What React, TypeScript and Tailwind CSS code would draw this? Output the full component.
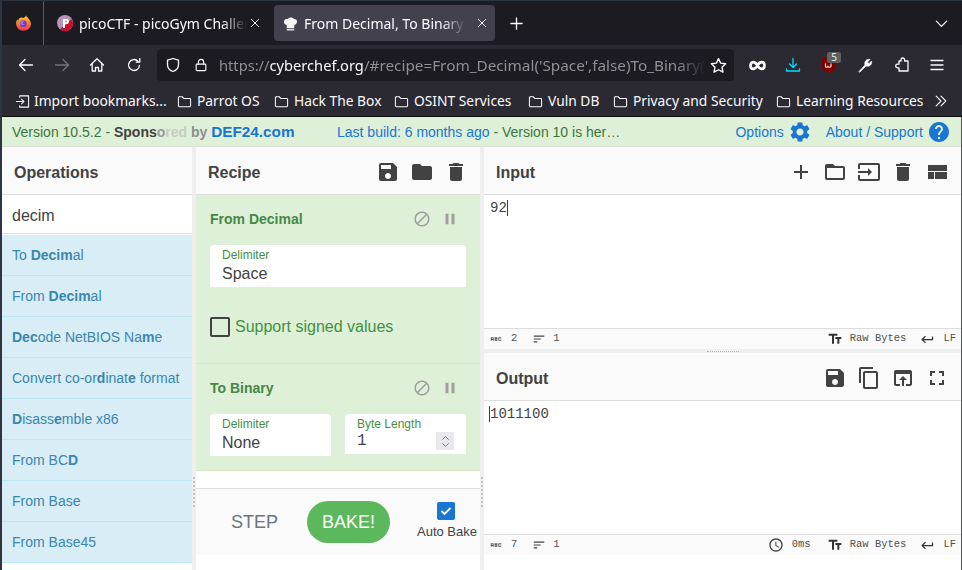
import type { ReactNode } from "react";

const ICONS = {
  save: "M17 3H5c-1.11 0-2 .9-2 2v14c0 1.1.89 2 2 2h14c1.1 0 2-.9 2-2V7l-4-4zm-5 16c-1.66 0-3-1.34-3-3s1.34-3 3-3 3 1.34 3 3-1.34 3-3 3zm3-10H5V5h10v4z",
  folder: "M10 4H4c-1.1 0-1.99.9-1.99 2L2 18c0 1.1.9 2 2 2h16c1.1 0 2-.9 2-2V8c0-1.1-.9-2-2-2h-8l-2-2z",
  trash: "M6 19c0 1.1.9 2 2 2h8c1.1 0 2-.9 2-2V7H6v12zM19 4h-3.5l-1-1h-5l-1 1H5v2h14V4z",
  add: "M19 13h-6v6h-2v-6H5v-2h6V5h2v6h6v2z",
  folderOpen: "M20 6h-8l-2-2H4c-1.1 0-1.99.9-1.99 2L2 18c0 1.1.9 2 2 2h16c1.1 0 2-.9 2-2V8c0-1.1-.9-2-2-2zm0 12H4V8h16v10z",
  input: "M21 3.01H3c-1.1 0-2 .9-2 2V9h2V4.99h18v14.03H3V15H1v4.01c0 1.1.9 1.98 2 1.98h18c1.1 0 2-.88 2-1.98v-14c0-1.11-.9-2-2-2zM11 16l4-4-4-4v3H1v2h10v3z",
  layout: "M3 19h6v-7H3v7zm7 0h12v-7H10v7zM3 5v6h19V5H3z",
  copy: "M16 1H4c-1.1 0-2 .9-2 2v14h2V3h12V1zm3 4H8c-1.1 0-2 .9-2 2v14c0 1.1.9 2 2 2h11c1.1 0 2-.9 2-2V7c0-1.1-.9-2-2-2zm0 16H8V7h11v14z",
  openIn: "M19 4H5c-1.11 0-2 .9-2 2v12c0 1.1.89 2 2 2h4v-2H5V8h14v10h-4v2h4c1.1 0 2-.9 2-2V6c0-1.1-.89-2-2-2zm-7 6l-4 4h3v6h2v-6h3l-4-4z",
  fullscreen: "M7 14H5v5h5v-2H7v-3zm-2-4h2V7h3V5H5v5zm12 7h-3v2h5v-5h-2v3zM14 5v2h3v3h2V5h-5z",
  block: "M12 2C6.48 2 2 6.48 2 12s4.48 10 10 10 10-4.48 10-10S17.52 2 12 2zM4 12c0-4.42 3.58-8 8-8 1.85 0 3.55.63 4.9 1.69L5.69 16.9C4.63 15.55 4 13.85 4 12zm8 8c-1.85 0-3.55-.63-4.9-1.69L18.31 7.1C19.37 8.45 20 10.15 20 12c0 4.42-3.58 8-8 8z",
  pause: "M6 19h4V5H6v14zm8-14v14h4V5h-4z",
  gear: "M19.14 12.94c.04-.3.06-.61.06-.94 0-.32-.02-.64-.07-.94l2.03-1.58c.18-.14.23-.41.12-.61l-1.92-3.32c-.12-.22-.37-.29-.59-.22l-2.39.96c-.5-.38-1.03-.7-1.62-.94l-.36-2.54c-.04-.24-.24-.41-.48-.41h-3.84c-.24 0-.43.17-.47.41l-.36 2.54c-.59.24-1.13.57-1.62.94l-2.39-.96c-.22-.08-.47 0-.59.22L2.74 8.87c-.12.21-.08.47.12.61l2.03 1.58c-.05.3-.09.63-.09.94s.02.64.07.94l-2.03 1.58c-.18.14-.23.41-.12.61l1.92 3.32c.12.22.37.29.59.22l2.39-.96c.5.38 1.03.7 1.62.94l.36 2.54c.05.24.24.41.48.41h3.84c.24 0 .44-.17.47-.41l.36-2.54c.59-.24 1.13-.56 1.62-.94l2.39.96c.22.08.47 0 .59-.22l1.92-3.32c.12-.22.07-.47-.12-.61l-2.01-1.58zM12 15.6c-1.98 0-3.6-1.62-3.6-3.6s1.62-3.6 3.6-3.6 3.6 1.62 3.6 3.6-1.62 3.6-3.6 3.6z",
  help: "M12 2C6.48 2 2 6.48 2 12s4.48 10 10 10 10-4.48 10-10S17.52 2 12 2zm1 17h-2v-2h2v2zm2.07-7.75l-.9.92C13.45 12.9 13 13.5 13 15h-2v-.5c0-1.1.45-2.1 1.17-2.83l1.24-1.26c.37-.36.59-.86.59-1.41 0-1.1-.9-2-2-2s-2 .9-2 2H8c0-2.21 1.79-4 4-4s4 1.79 4 4c0 .88-.36 1.68-.93 2.25z",
  textFields: "M2.5 4v3h5v12h3V7h5V4h-13zm19 5h-9v3h3v7h3v-7h3V9z",
  ret: "M19 7v4H5.83l3.58-3.59L8 6l-6 6 6 6 1.41-1.41L5.83 13H21V7z",
  sort: "M3 18h6v-2H3v2zM3 6v2h18V6H3zm0 7h12v-2H3v2z",
  abc: "M21 11h-1.5v-.5h-2v3h2V13H21v1c0 .55-.45 1-1 1h-3c-.55 0-1-.45-1-1v-4c0-.55.45-1 1-1h3c.55 0 1 .45 1 1v1zM8 10v5H6.5v-1.5h-2V15H3v-5c0-.55.45-1 1-1h3c.55 0 1 .45 1 1zm-1.5.5h-2V12h2v-1.5zm7 1.5c.55 0 1 .45 1 1v1c0 .55-.45 1-1 1h-4V9h4c.55 0 1 .45 1 1v1c0 .55-.45 1-1 1zM11 10.5v.75h2v-.75h-2zm2 2.25h-2v.75h2v-.75z",
  clock: "M11.99 2C6.47 2 2 6.48 2 12s4.47 10 9.99 10C17.52 22 22 17.52 22 12S17.52 2 11.99 2zM12 20c-4.42 0-8-3.58-8-8s3.58-8 8-8 8 3.58 8 8-3.58 8-8 8zm.5-13H11v6l5.25 3.15.75-1.23-4.5-2.67z",
};

function Mi({ name, className }: { name: keyof typeof ICONS; className: string }) {
  return (
    <svg viewBox="0 0 24 24" fill="currentColor" className={className}>
      <path d={ICONS[name]} />
    </svg>
  );
}

// Firefox chrome icons, 16 unit box, stroked
function Fx({ children, className }: { children: ReactNode; className?: string }) {
  return (
    <svg viewBox="0 0 16 16" fill="none" stroke="currentColor" strokeWidth="1.3" strokeLinecap="round" strokeLinejoin="round" className={className ?? "w-4 h-4 text-[#fbfbfe]"}>
      {children}
    </svg>
  );
}

function FolderBm() {
  return (
    <svg viewBox="0 0 16 16" fill="none" stroke="#fbfbfe" strokeWidth="1.1" className="w-[15px] h-[15px] shrink-0">
      <path d="M1.5 4c0-.6.4-1 1-1h3.2l1.5 1.7h6.3c.6 0 1 .4 1 1V12.5c0 .6-.4 1-1 1h-11c-.6 0-1-.4-1-1z" />
    </svg>
  );
}

function Bookmark({ label, w }: { label: string; w: string }) {
  return (
    <div className={`flex items-center gap-[5px] shrink-0 ${w}`}>
      <FolderBm />
      <span className="whitespace-nowrap">{label}</span>
    </div>
  );
}

function PaneHeader({ title, children }: { title: string; children?: ReactNode }) {
  return (
    <div className="h-[48px] shrink-0 flex items-center bg-[#fafafa] border-b border-[#dddddd] pl-3 pt-[3px]">
      <span className="pt-[2px] text-[16px] font-bold text-[#424242]">{title}</span>
      <div className="ml-auto flex items-center gap-[10px] text-[#424242]">{children}</div>
    </div>
  );
}

function Status({ chars, time }: { chars: string; time?: boolean }) {
  return (
    <div className="h-[21px] shrink-0 flex items-center bg-[#fafafa] border-t border-[#dddddd] pl-[5px] pr-[5px] font-['Liberation_Mono',monospace] text-[10.5px] text-[#505050]">
      <Mi name="abc" className="w-[14px] h-[14px] text-[#555]" />
      <span className="ml-[8px]">{chars}</span>
      <Mi name="sort" className="w-[14px] h-[14px] ml-[15px] text-[#424242]" />
      <span className="ml-[7px]">1</span>
      <div className="ml-auto flex items-center">
        {time && (
          <>
            <Mi name="clock" className="w-[16px] h-[16px] text-[#424242]" />
            <span className="ml-[8px] mr-[16px]">0ms</span>
          </>
        )}
        <Mi name="textFields" className="w-[16px] h-[16px] text-[#333]" />
        <span className="ml-[7px]">Raw Bytes</span>
        <Mi name="ret" className="w-[15px] h-[15px] ml-[14px] text-[#333]" />
        <span className="ml-[8px]">LF</span>
      </div>
    </div>
  );
}

const ops: ReactNode[] = [
  <>To <b>Decim</b>al</>,
  <>From <b>Decim</b>al</>,
  <><b>Dec</b>ode NetBIOS Na<b>m</b>e</>,
  <>Convert co-or<b>d</b>inat<b>e</b> format</>,
  <><b>D</b>isass<b>e</b>mble x86</>,
  <>From BC<b>D</b></>,
  <>From Base</>,
  <>From Base45</>,
];

function OpControls() {
  return (
    <div className="ml-auto mr-[7px] flex items-center gap-[10px] text-[#9e9e9e]">
      <Mi name="block" className="w-[18px] h-[18px]" />
      <Mi name="pause" className="w-[18px] h-[18px]" />
    </div>
  );
}

function Field({ label, value, className }: { label: string; value: string; className: string }) {
  return (
    <div className={`bg-white rounded-t-[4px] pl-3 ${className}`}>
      <div className="text-[12px] leading-[14px] pt-[3px] text-[#3f9142]">{label}</div>
      <div className="text-[16px] leading-[20px] mt-[2px] text-[#424242]">{value}</div>
    </div>
  );
}

function Gutter() {
  return (
    <div className="w-[4px] shrink-0 bg-[#efefef] flex justify-center">
      <div className="mt-[330px] h-[30px] border-l-2 border-dotted border-[#c4c4c4]" />
    </div>
  );
}

export default function App() {
  return (
    <div className="w-[962px] h-[570px] overflow-hidden flex flex-col bg-[#2f3441] font-['Liberation_Sans',Arial,sans-serif]">
      <div className="pt-px shrink-0 font-['Noto_Sans',sans-serif] text-[#fbfbfe]">
        {/* tab strip */}
        <div className="h-[44px] bg-[#1c1b22] flex items-center ml-[2px] text-[14px]">
          <div className="w-[42px] h-full flex items-center justify-center border-r border-[#5b5b66]">
            <svg viewBox="0 0 20 20" className="w-[17px] h-[18px] ml-px">
              <defs>
                <linearGradient id="ff" x1="0" y1="0" x2="0" y2="1">
                  <stop offset="0" stopColor="#ffcf3a" />
                  <stop offset="0.55" stopColor="#ff7a1f" />
                  <stop offset="1" stopColor="#f0335a" />
                </linearGradient>
              </defs>
              <path d="M13 1c.5 2 2 2.700 3.500 4.500C18.500 8 19 10 18.700 12c-.6 4-4.200 7-8.700 7-4.800 0-8.700-3.700-8.700-8.500 0-1.800.5-3.500 1.500-4.800.1.800.5 1.500 1 1.800C4.200 4.500 6 3.500 7.500 3.500 8.500 3.500 9 4 9.800 4 11.500 3.500 12.800 2.500 13 1z" fill="url(#ff)" />
              <circle cx="9.800" cy="10.800" r="4" fill="#6b3fc0" />
              <path d="M6.500 8.500c1.500-1 3.500-1 4.500 0-1 .2-2 .8-2 1.500 0 1 1.500 1.500 3 1-1 1.500-3 2-4.500 1-1-.8-1.500-2.300-1-3.500z" fill="#a56bff" />
            </svg>
          </div>
          <div className="w-[230px] h-full flex items-center pl-[13px] relative shrink-0">
            <svg viewBox="0 0 16 16" className="w-[16px] h-[16px] shrink-0">
              <circle cx="8" cy="8" r="8" fill="#b693b8" />
              <path d="M16 8a8 8 0 0 1-13 6.300L14.500 4A8 8 0 0 1 16 8z" fill="#c8102e" />
              <path d="M6 13V4h3.200c1.700 0 2.800 1 2.800 2.600S10.900 9.300 9.200 9.300H8V13z" fill="#fff" />
              <circle cx="9" cy="6.600" r="1" fill="#b693b8" />
            </svg>
            <span className="ml-[6px] whitespace-nowrap overflow-hidden w-[168px] [mask-image:linear-gradient(to_right,black_85%,transparent)]">picoCTF - picoGym Challenges</span>
            <svg viewBox="0 0 12 12" className="w-[10px] h-[10px] ml-[3px] shrink-0" stroke="#fbfbfe" strokeWidth="1.2" strokeLinecap="round">
              <path d="M1.500 1.500l9 9M10.500 1.500l-9 9" />
            </svg>
          </div>
          <div className="w-[221px] h-[36px] bg-[#42414d] rounded-[4px] flex items-center pl-[9px] shrink-0 overflow-hidden">
            <svg viewBox="0 0 16 16" className="w-[15px] h-[15px] shrink-0">
              <path d="M4 13V9.500C2 9 .5 7.500 1 5.500 1.500 3.500 3.500 3 5 3.300 5.700 2 7 1.500 8.500 1.500S11 2 11.500 3.200c1.500-.3 3 .5 3.500 2 .4 2-1 3.700-3 4.300V13z" fill="#f3f3f3" />
              <path d="M4 13.800h8v1.700H4z" fill="#d8d8d8" />
            </svg>
            <span className="ml-[6px] whitespace-nowrap overflow-hidden w-[162px] [mask-image:linear-gradient(to_right,black_85%,transparent)]">From Decimal, To Binary - CyberChef</span>
            <svg viewBox="0 0 12 12" className="w-[10px] h-[10px] ml-[11px] shrink-0" stroke="#fbfbfe" strokeWidth="1.2" strokeLinecap="round">
              <path d="M1.500 1.500l9 9M10.500 1.500l-9 9" />
            </svg>
          </div>
          <Fx className="w-[15px] h-[15px] ml-[14px] text-[#fbfbfe]">
            <path d="M8 2v12M2 8h12" strokeWidth="1.4" />
          </Fx>
          <Fx className="w-[15px] h-[15px] ml-auto mr-[13px] text-[#fbfbfe]">
            <path d="M2.500 5.500L8 11l5.500-5.500" />
          </Fx>
        </div>

        {/* nav bar */}
        <div className="h-[38px] bg-[#2b2a33] flex items-center ml-[2px] pt-[2px]">
          <Fx className="w-[16px] h-[16px] ml-[16px] text-[#fbfbfe]">
            <path d="M14.500 8h-13M7 2.500L1.500 8 7 13.500" />
          </Fx>
          <Fx className="w-[16px] h-[16px] ml-[20px] text-[#72717a]">
            <path d="M1.500 8h13M9 2.500L14.500 8 9 13.500" />
          </Fx>
          <Fx className="w-[16px] h-[16px] ml-[19px] text-[#fbfbfe]">
            <path d="M1.500 8L8 1.800 14.500 8M3.200 6.700V14h3.300v-3.500h3V14h3.300V6.700" />
          </Fx>
          <Fx className="w-[16px] h-[16px] ml-[21px] text-[#fbfbfe]">
            <path d="M13.500 8.500A5.500 5.500 0 1 1 12 4.200M13.800 1.700v3.500h-3.500" />
          </Fx>
          <div className="w-[577px] h-[32px] ml-[15px] bg-[#1c1b22] rounded-[4px] flex items-center text-[14.67px]">
            <Fx className="w-[16px] h-[16px] ml-[8px] text-[#fbfbfe]">
              <path d="M8 1.500l5.500 1.700v4.300c0 3.500-2.500 6-5.500 7-3-1-5.500-3.500-5.500-7V3.200z" />
            </Fx>
            <Fx className="w-[14px] h-[16px] ml-[13px] text-[#fbfbfe]">
              <rect x="2.500" y="7" width="11" height="7.500" rx="1" />
              <path d="M5 7V4.500a3 3 0 0 1 6 0V7" />
            </Fx>
            <div className="ml-[11px] w-[487px] whitespace-nowrap overflow-hidden text-[#8f8f96] [mask-image:linear-gradient(to_right,black_94%,transparent)]">
              https://<span className="text-[#fbfbfe]">cyberchef.org</span>
              <span className="text-[15.3px]">/#recipe=From_Decimal('Space',false)To_Binary('None',8)</span>
            </div>
            <Fx className="w-[17px] h-[17px] ml-auto mr-[7px] text-[#fbfbfe]">
              <path d="M8 1.500l2 4.300 4.700.6-3.400 3.200.9 4.700L8 12l-4.200 2.300.9-4.700L1.300 6.400 6 5.800z" />
            </Fx>
          </div>
          <svg viewBox="0 0 20 12" className="w-[17px] h-[11px] ml-[15px]" fill="none" stroke="#fbfbfe" strokeWidth="3.200">
            <path d="M10 6C8.500 3 6.500 2 4.800 2 3 2 1.800 3.800 1.800 6s1.200 4 3 4c1.700 0 3.700-1 5.200-4 1.500-3 3.500-4 5.200-4 1.800 0 3 1.800 3 4s-1.200 4-3 4c-1.700 0-3.700-1-5.200-4z" />
          </svg>
          <Fx className="w-[16px] h-[16px] ml-[19px] text-[#00ddff]">
            <path d="M8 1.500V10M4.500 7L8 10.500 11.500 7M1.500 12v2h13v-2" />
          </Fx>
          <div className="relative ml-[21px] w-[14px] h-[16px]">
            <svg viewBox="0 0 14 16" className="w-[14px] h-[16px]">
              <path d="M0 1.500L7 0l7 1.500V9c0 3.500-3 5.500-7 7-4-1.500-7-3.500-7-7z" fill="#800000" />
              <path d="M3.500 6.500v3c0 1 2 1 2.500 0 .4 1 2.500 1 3 0v-3" fill="none" stroke="#f2dede" strokeWidth="1.200" />
            </svg>
            <span className="absolute -top-[5px] left-[5px] w-[14px] h-[11px] bg-[#5f5f5f] rounded-[2px] text-[10px] leading-[11px] text-center text-[#eee]">5</span>
          </div>
          <Fx className="w-[16px] h-[16px] ml-[21px] text-[#fbfbfe]">
            <path d="M2 14.500l6-6.500c-.7-2 0-4 1.500-5 1-.7 2.300-.9 3.500-.5L10.500 5l.5 1 1 .5 2.500-2.500c.4 1.200.2 2.500-.5 3.500-1 1.500-3 2.200-5 1.500L3 15z" fill="currentColor" strokeWidth="0.6" />
          </Fx>
          <Fx className="w-[16px] h-[16px] ml-[21px] text-[#fbfbfe]">
            <path d="M7 4V2.800a1.800 1.800 0 0 1 3.600 0V4H14v10H5v-3.200H3.500a1.800 1.800 0 0 1 0-3.600H5V4z" />
          </Fx>
          <Fx className="w-[16px] h-[16px] ml-[19px] text-[#fbfbfe]">
            <path d="M2 3.500h12M2 8h12M2 12.500h12" />
          </Fx>
        </div>

        {/* bookmarks bar */}
        <div className="h-[34px] bg-[#2b2a33] border-b border-[#0c0c0d] flex items-center ml-[2px] pt-[3px] text-[13.8px]">
          <div className="flex items-center shrink-0 w-[175px] pl-[13px] gap-[4px]">
            <Fx className="w-[15px] h-[15px] shrink-0 text-[#fbfbfe]">
              <path d="M5 3.500V2h9.500v12H5v-1.500M1.500 8h8M7 5.500L9.500 8 7 10.500" strokeWidth="1.100" />
            </Fx>
            <span className="whitespace-nowrap">Import bookmarks...</span>
          </div>
          <Bookmark label="Parrot OS" w="w-[97px]" />
          <Bookmark label="Hack The Box" w="w-[120px]" />
          <Bookmark label="OSINT Services" w="w-[134px]" />
          <Bookmark label="Vuln DB" w="w-[85px]" />
          <Bookmark label="Privacy and Security" w="w-[163px]" />
          <Bookmark label="Learning Resources" w="w-[158px]" />
          <Fx className="w-[14px] h-[14px] shrink-0 text-[#fbfbfe]">
            <path d="M2.500 2.500L8 8l-5.500 5.500M8 2.500L13.500 8 8 13.500" />
          </Fx>
        </div>
      </div>

      {/* cyberchef page */}
      <div className="flex-1 min-h-0 ml-[2px] flex flex-col bg-white border-r border-[#55565c]">
        <div className="h-[30px] shrink-0 bg-[#dff0d8] border-b border-[#dddddd] flex items-center pl-[10px] pt-px text-[14px] text-[#3c763d]">
          <span className="w-[325px] whitespace-nowrap">
            Version 10.5.2 - <b className="text-[#424242]">Spons</b>
            <b className="text-[#9a9a9a]">o</b>
            <b className="text-[#c6cdc3]">red</b> <b className="text-[#8e8e8e]">by</b>{" "}
            <b className="text-[#1976d2] text-[15.3px]">DEF24.com</b>
          </span>
          <span className="whitespace-nowrap">
            <span className="text-[#1976d2]">Last build: 6 months ago</span> - Version 10 is her…
          </span>
          <span className="ml-auto text-[#1976d2]">Options</span>
          <Mi name="gear" className="w-[24px] h-[24px] ml-[4px] text-[#1976d2]" />
          <span className="ml-[14px] text-[#1976d2]">About / Support</span>
          <Mi name="help" className="w-[24px] h-[24px] ml-[4px] mr-[10px] text-[#1976d2]" />
        </div>

        <div className="flex-1 min-h-0 flex">
          {/* operations */}
          <div className="w-[190px] shrink-0 flex flex-col overflow-hidden">
            <PaneHeader title="Operations" />
            <div className="h-[39px] shrink-0 flex items-center pl-[10px] pt-[4px] text-[16px] text-[#424242] border-b border-[#dddddd]">decim</div>
            <div className="h-px shrink-0 bg-white" />
            {ops.map((op, i) => (
              <div key={i} className="h-[41px] shrink-0 flex items-center pl-[10px] bg-[#d9edf7] border-b border-[#bce8f1] text-[14px] text-[#3a87ad] whitespace-nowrap">
                <span>{op}</span>
              </div>
            ))}
          </div>
          <Gutter />

          {/* recipe */}
          <div className="w-[284px] shrink-0 flex flex-col">
            <PaneHeader title="Recipe">
              <Mi name="save" className="w-[24px] h-[24px]" />
              <Mi name="folder" className="w-[24px] h-[24px]" />
              <Mi name="trash" className="w-[24px] h-[24px] mr-[12px]" />
            </PaneHeader>
            <div className="h-[169px] shrink-0 bg-[#dff0d8] border-b border-[#d6e9c6] px-[14px] pt-[13px]">
              <div className="flex items-center h-[22px]">
                <span className="text-[14px] font-bold text-[#468847]">From Decimal</span>
                <OpControls />
              </div>
              <Field label="Delimiter" value="Space" className="mt-[15px] h-[42px]" />
              <div className="flex items-center mt-[28px]">
                <div className="w-[20px] h-[20px] border-2 border-[#424242] rounded-[2px]" />
                <span className="ml-[5px] text-[16px] text-[#3f9142]">Support signed values</span>
              </div>
            </div>
            <div className="h-[107px] shrink-0 bg-[#dff0d8] border-b border-[#d6e9c6] px-[14px] pt-[13px]">
              <div className="flex items-center h-[22px]">
                <span className="text-[14px] font-bold text-[#468847]">To Binary</span>
                <OpControls />
              </div>
              <div className="flex gap-[14px] mt-[15px]">
                <Field label="Delimiter" value="None" className="w-[121px] h-[42px]" />
                <div className="w-[121px] h-[40px] bg-white rounded-t-[4px] pl-3 flex">
                  <div>
                    <div className="text-[12px] leading-[14px] pt-[3px] text-[#3f9142]">Byte Length</div>
                    <div className="text-[16px] leading-[20px] font-['Liberation_Mono',monospace] text-[#424242]">1</div>
                  </div>
                  <div className="ml-auto mr-[12px] mt-[18px] w-[18px] h-[18px] bg-[#e9e9ed] flex items-center justify-center">
                    <svg viewBox="0 0 10 14" className="w-[9px] h-[13px]" fill="none" stroke="#77777a" strokeWidth="1.100">
                      <path d="M1.500 5L5 1.500 8.500 5M1.500 9L5 12.500 8.500 9" />
                    </svg>
                  </div>
                </div>
              </div>
            </div>
            <div className="h-[17px] shrink-0 bg-white" />
            <div className="h-[67px] shrink-0 bg-[#fafafa] border-t border-[#dddddd] flex items-center pl-[35px]">
              <span className="text-[18px] text-[#6c757d] w-[76px]">STEP</span>
              <div className="w-[83px] h-[42px] rounded-full bg-[#5cb85c] flex items-center justify-center text-[18px] text-white">BAKE!</div>
              <div className="ml-[27px] -mt-[4px] flex flex-col items-center">
                <div className="w-[18px] h-[18px] mr-[3px] rounded-[2px] bg-[#1976d2] flex items-center justify-center">
                  <svg viewBox="0 0 14 14" className="w-[14px] h-[14px]" fill="none" stroke="white" strokeWidth="1.800">
                    <path d="M2.500 7l3 3 6-6" />
                  </svg>
                </div>
                <span className="mt-[4px] text-[13px] leading-[15px] text-[#424242] whitespace-nowrap">Auto Bake</span>
              </div>
            </div>
          </div>
          <Gutter />

          {/* input and output */}
          <div className="flex-1 min-w-0 flex flex-col">
            <PaneHeader title="Input">
              <Mi name="add" className="w-[24px] h-[24px]" />
              <Mi name="folderOpen" className="w-[24px] h-[24px]" />
              <Mi name="input" className="w-[24px] h-[24px]" />
              <Mi name="trash" className="w-[24px] h-[24px]" />
              <Mi name="layout" className="w-[24px] h-[24px] mr-[12px]" />
            </PaneHeader>
            <div className="h-[133px] shrink-0 pl-[6px] pt-[5px] font-['Liberation_Mono',monospace] text-[14px] leading-[16px] text-[#424242]">
              <span className="border-r border-[#424242]">92</span>
            </div>
            <Status chars="2" />
            <div className="h-[4px] shrink-0 bg-[#efefef] flex justify-center items-center">
              <div className="w-[32px] border-t border-dotted border-[#b5b5b5]" />
            </div>
            <PaneHeader title="Output">
              <Mi name="save" className="w-[24px] h-[24px]" />
              <Mi name="copy" className="w-[24px] h-[24px]" />
              <Mi name="openIn" className="w-[24px] h-[24px]" />
              <Mi name="fullscreen" className="w-[24px] h-[24px] mr-[12px]" />
            </PaneHeader>
            <div className="h-[133px] shrink-0 pl-[5px] pt-[5px] font-['Liberation_Mono',monospace] text-[14px] leading-[16px] text-[#424242]">
              <span className="border-l border-[#424242]">1011100</span>
            </div>
            <Status chars="7" time />
            <div className="flex-1 bg-white" />
          </div>
        </div>
      </div>
    </div>
  );
}
